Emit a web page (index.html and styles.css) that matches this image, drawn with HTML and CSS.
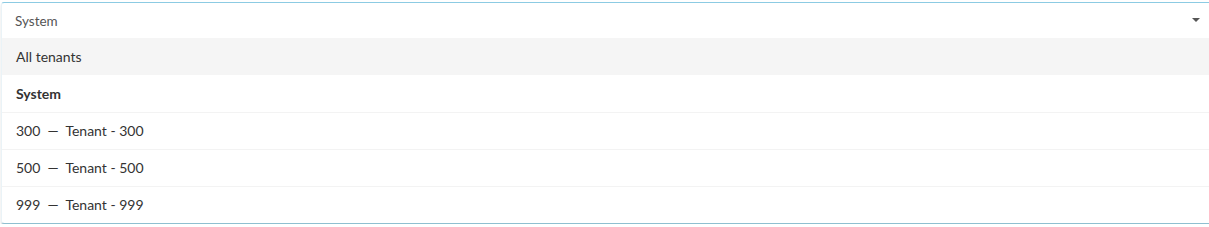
FILE: index.html
```html
<!DOCTYPE html>
<html>
<head>
<meta charset="utf-8">
<link rel="stylesheet" href="styles.css">
</head>
<body>
<div class="select">
  <div class="select-head">
    <span class="value">System</span>
    <span class="caret"></span>
  </div>
  <ul class="menu">
    <li class="opt active">All tenants</li>
    <li class="opt bold">System</li>
    <li class="opt sep">300 &nbsp;—&nbsp; Tenant - 300</li>
    <li class="opt sep">500 &nbsp;—&nbsp; Tenant - 500</li>
    <li class="opt sep">999 &nbsp;—&nbsp; Tenant - 999</li>
  </ul>
</div>
</body>
</html>
```
FILE: styles.css
```css
html, body {
  margin: 0;
  padding: 0;
  background: #ffffff;
}
body {
  font-family: Lato, "Open Sans", sans-serif;
  color: #333333;
  padding: 2px 0 0 1px;
}
.select {
  border-top: 1px solid #8ccbe3;
  border-left: 1px solid #eaf3f7;
  border-bottom: 1px solid #8fbfd0;
  border-radius: 3px 0 0 3px;
  box-shadow: 0 2px 2px rgba(0, 0, 0, 0.15);
  background: #fff;
}
.select-head {
  height: 35px;
  display: flex;
  align-items: center;
  justify-content: space-between;
  padding: 0 9px 0 13px;
}
.value {
  font-size: 13.5px;
  color: #555555;
}
.caret {
  width: 0;
  height: 0;
  border-left: 4px solid transparent;
  border-right: 4px solid transparent;
  border-top: 4px solid #555;
  margin-top: -2px;
}
.menu {
  list-style: none;
  margin: 0;
  padding: 0;
}
.opt {
  box-sizing: border-box;
  height: 37px;
  display: flex;
  align-items: center;
  padding: 0 14px;
  font-size: 14px;
  color: #333;
  white-space: pre;
}
.opt.sep {
  padding-bottom: 2px;
  border-top: 1px solid #f3f3f3;
}
.opt.active {
  background: #f5f5f5;
}
.opt.bold {
  font-weight: 700;
}
```
